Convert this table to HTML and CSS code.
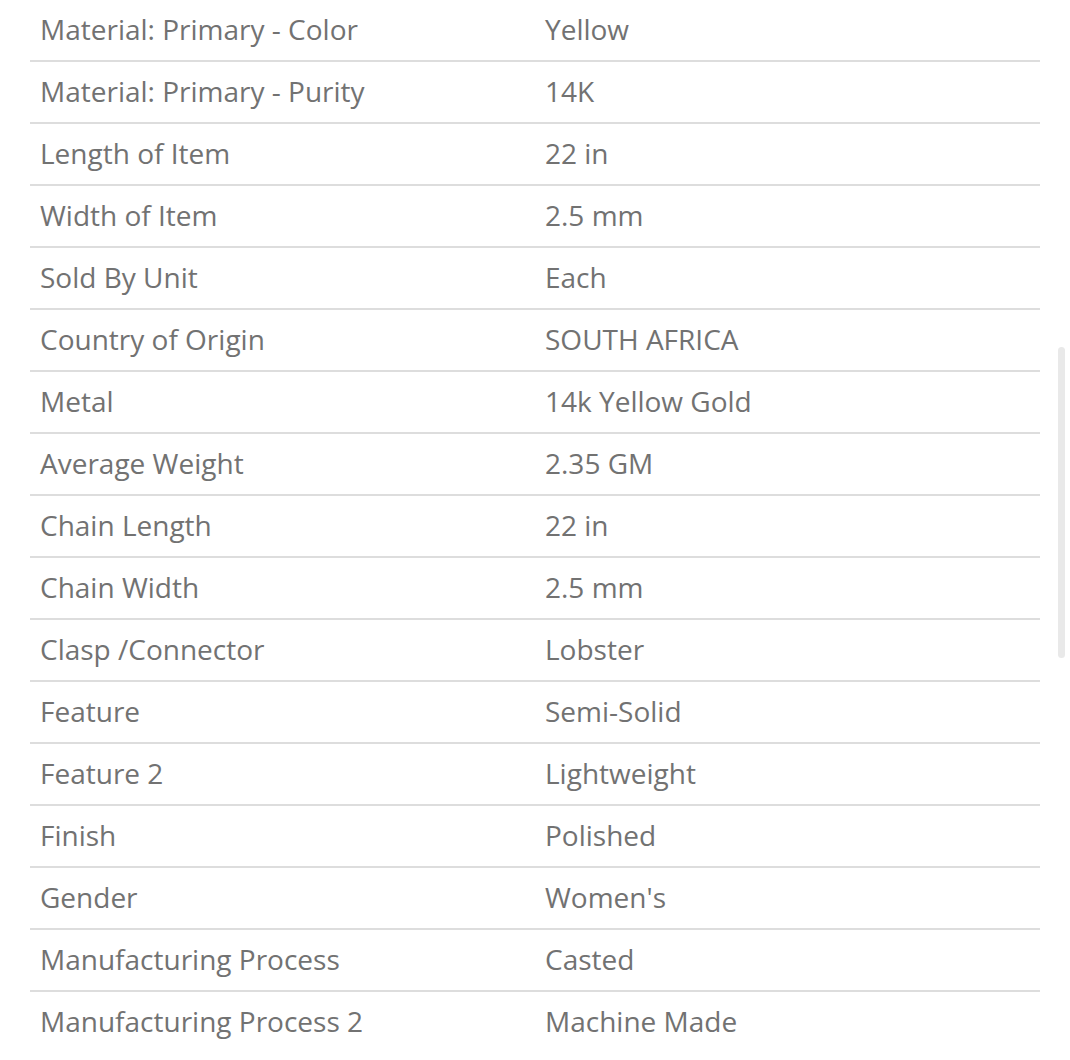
FILE: index.html
```html
<!DOCTYPE html>
<html lang="en">
<head>
<meta charset="utf-8">
<title>Specifications</title>
<link rel="stylesheet" href="styles.css">
</head>
<body>
<div class="page">
  <table class="specs">
    <tbody>
      <tr><td>Material: Primary - Color</td><td>Yellow</td></tr>
      <tr><td>Material: Primary - Purity</td><td>14K</td></tr>
      <tr><td>Length of Item</td><td>22 in</td></tr>
      <tr><td>Width of Item</td><td>2.5 mm</td></tr>
      <tr><td>Sold By Unit</td><td>Each</td></tr>
      <tr><td>Country of Origin</td><td>SOUTH AFRICA</td></tr>
      <tr><td>Metal</td><td>14k Yellow Gold</td></tr>
      <tr><td>Average Weight</td><td>2.35 GM</td></tr>
      <tr><td>Chain Length</td><td>22 in</td></tr>
      <tr><td>Chain Width</td><td>2.5 mm</td></tr>
      <tr><td>Clasp /Connector</td><td>Lobster</td></tr>
      <tr><td>Feature</td><td>Semi-Solid</td></tr>
      <tr><td>Feature 2</td><td>Lightweight</td></tr>
      <tr><td>Finish</td><td>Polished</td></tr>
      <tr><td>Gender</td><td>Women's</td></tr>
      <tr><td>Manufacturing Process</td><td>Casted</td></tr>
      <tr><td>Manufacturing Process 2</td><td>Machine Made</td></tr>
    </tbody>
  </table>
</div>
<div class="scroll-thumb"></div>
</body>
</html>
```
FILE: styles.css
```css
html, body {
  margin: 0;
  padding: 0;
  background: #ffffff;
  overflow: hidden;
}
.page {
  padding: 0 30px;
  font-family: "Open Sans", "Liberation Sans", sans-serif;
  color: #727272;
}
.specs {
  width: 100%;
  border-collapse: collapse;
  table-layout: fixed;
}
.specs td {
  width: 50%;
  height: 58px;
  padding: 0 10px 2px;
  font-size: 28px;
  line-height: 58px;
  vertical-align: middle;
  white-space: nowrap;
}
.specs tr + tr td {
  border-top: 2px solid #dddddd;
}
.scroll-thumb {
  position: fixed;
  left: 1058px;
  top: 347px;
  width: 7px;
  height: 311px;
  border-radius: 4px;
  background: #e9e9e9;
}
```
